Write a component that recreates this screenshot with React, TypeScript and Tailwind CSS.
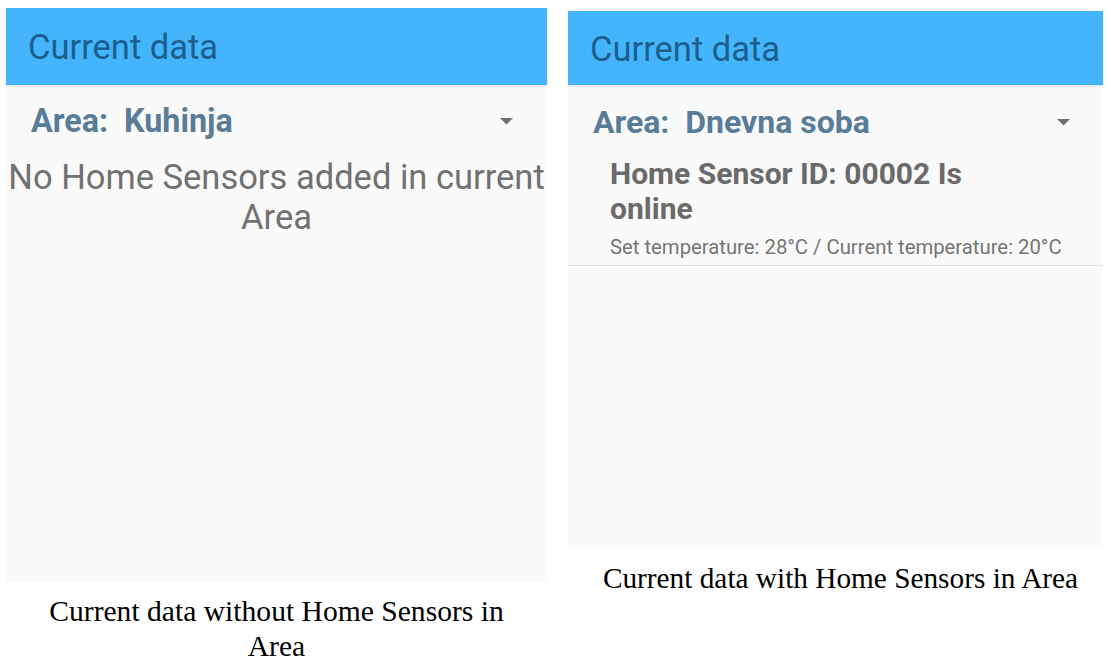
import React from "react";

const Arrow = () => (
  <svg width="13" height="7" viewBox="0 0 13 7" className="block">
    <path d="M0 0 L13 0 L6.5 6.5 Z" fill="#6f6f6f" />
  </svg>
);

export default function App() {
  return (
    <div
      className="w-[1111px] h-[670px] bg-white flex gap-[21px] pl-[6px] overflow-hidden"
      style={{ fontFamily: "Roboto, 'Noto Sans', sans-serif" }}
    >
      {/* Left */}
      <div className="w-[541px] flex flex-col pt-[8px]">
        <div className="h-[574px] bg-[#fafafa] flex flex-col">
          <div className="h-[77px] bg-[#44b5fc] flex items-center pl-[22px] shadow-[0_1px_2px_rgba(0,0,0,0.12)]">
            <span className="text-[34.5px] text-[#1b5f8c] leading-none pt-[2px]">Current data</span>
          </div>
          <div className="flex items-center justify-between pl-[25px] pr-[34px] pt-[18px] pb-[18px]">
            <span className="text-[32.3px] font-bold text-[#597c98] leading-[36px]">
              Area:&nbsp; Kuhinja
            </span>
            <Arrow />
          </div>
          <div className="text-center text-[34.5px] leading-[40px] text-[#717171] whitespace-nowrap">
            No Home Sensors added in current
            <br />
            Area
          </div>
        </div>
        <div
          className="text-center text-[29.6px] leading-[35px] text-black mt-[12px] px-[30px]"
          style={{ fontFamily: "'Liberation Serif', serif" }}
        >
          Current data without Home Sensors in Area
        </div>
      </div>

      {/* Right */}
      <div className="w-[535px] flex flex-col pt-[11px]">
        <div className="h-[536px] bg-[#fafafa] flex flex-col">
          <div className="h-[74px] bg-[#44b5fc] flex items-center pl-[22px] shadow-[0_1px_2px_rgba(0,0,0,0.12)]">
            <span className="text-[34.5px] text-[#1b5f8c] leading-none pt-[2px]">Current data</span>
          </div>
          <div className="flex items-center justify-between pl-[25px] pr-[33px] pt-[19px] pb-[16px]">
            <span className="text-[32px] font-bold text-[#597c98] leading-[36px]">
              Area:&nbsp; Dnevna soba
            </span>
            <Arrow />
          </div>
          <div className="pl-[42px] pr-[20px] pb-[6px] border-b border-[#e2e2e2]">
            <div className="w-[420px] text-[30px] font-bold text-[#6a6a6a] leading-[35px]">
              Home Sensor ID: 00002 Is online
            </div>
            <div className="text-[20.3px] text-[#757575] leading-[24px] mt-[9px] whitespace-nowrap">
              Set temperature: 28°C / Current temperature: 20°C
            </div>
          </div>
        </div>
        <div
          className="text-center text-[29.3px] leading-[35px] text-black mt-[14px] pl-[10px]"
          style={{ fontFamily: "'Liberation Serif', serif" }}
        >
          Current data with Home Sensors in Area
        </div>
      </div>
    </div>
  );
}
